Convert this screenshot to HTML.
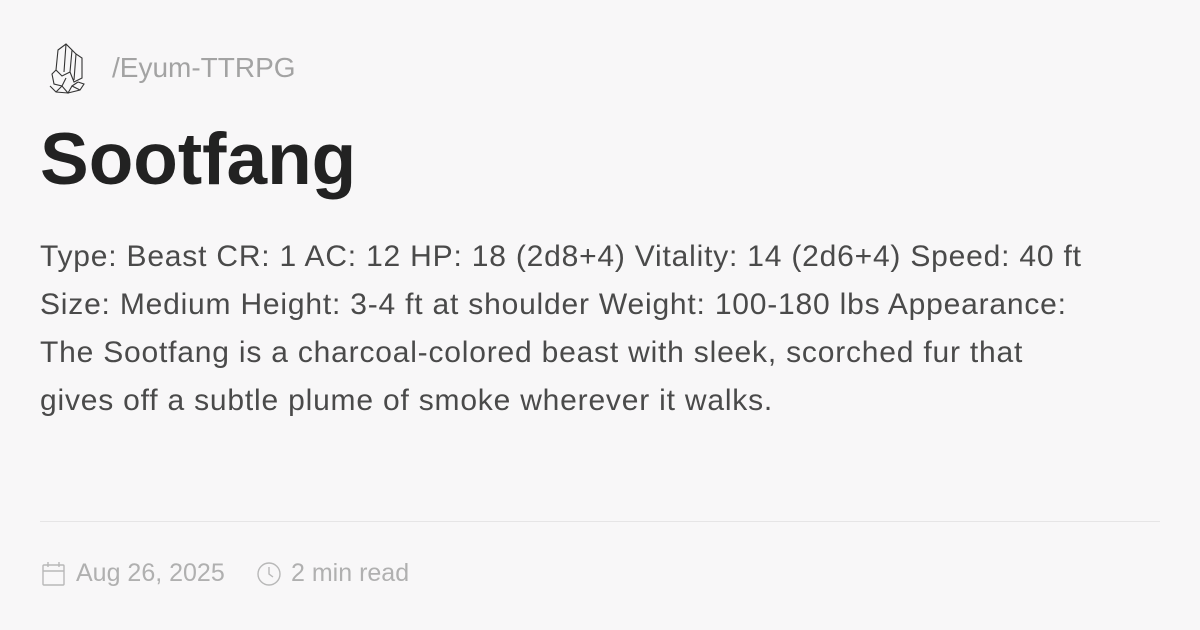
<!DOCTYPE html>
<html><head><meta charset="utf-8"><style>
body{margin:0;width:1200px;height:630px;background:#f8f7f8;font-family:"Liberation Sans",sans-serif;position:relative;overflow:hidden}
.logo{position:absolute;left:48px;top:42px}
.crumb{position:absolute;left:112px;top:52px;font-size:28px;color:#a3a3a3}
h1{position:absolute;left:40px;top:118px;margin:0;font-size:73px;font-weight:bold;color:#222}
.body{position:absolute;left:40px;top:233px;font-size:30px;letter-spacing:0.8px;line-height:48px;color:#4a4a4a;white-space:nowrap}
.hr{position:absolute;left:40px;right:40px;top:521px;height:1px;background:#e6e5e6}
.meta{position:absolute;top:559px;font-size:25px;color:#b0b0b0}
</style></head><body>
<svg class="logo" width="38" height="52" viewBox="0 0 38 52" fill="none" stroke="#333" stroke-width="1.1">
<path d="M10 8 L18 2 L24 8 L22 30 L14 34 L8 28 Z M18 2 L16 30 M24 8 L28 12 L34 16 L34 36 L26 40 L22 30 M28 12 L26 38 M8 28 L4 32 L6 42 L14 44 L18 36 M2 44 L8 50 L20 51 L32 48 L36 42 L30 40 M8 50 L14 44 L20 51 L24 44 L32 48 M24 44 L30 40"/>
</svg>
<div class="crumb">/Eyum-TTRPG</div>
<h1>Sootfang</h1>
<div class="body">Type: Beast CR: 1 AC: 12 HP: 18 (2d8+4) Vitality: 14 (2d6+4) Speed: 40 ft<br>Size: Medium Height: 3-4 ft at shoulder Weight: 100-180 lbs Appearance:<br>The Sootfang is a charcoal-colored beast with sleek, scorched fur that<br>gives off a subtle plume of smoke wherever it walks.</div>
<div class="hr"></div>
<svg style="position:absolute;left:42px;top:561px" width="24" height="26" viewBox="0 0 24 26" fill="none" stroke="#b8b8b8" stroke-width="1.4"><rect x="1" y="4" width="21" height="20" rx="1"/><path d="M1 10 H22 M6 1 V6 M17 1 V6"/></svg>
<div class="meta" style="left:76px">Aug 26, 2025</div>
<svg style="position:absolute;left:256px;top:561px" width="26" height="26" viewBox="0 0 26 26" fill="none" stroke="#b8b8b8" stroke-width="1.4"><circle cx="13" cy="13" r="11"/><path d="M13 6 V13 L17 16"/></svg>
<div class="meta" style="left:291px">2 min read</div>
</body></html>
